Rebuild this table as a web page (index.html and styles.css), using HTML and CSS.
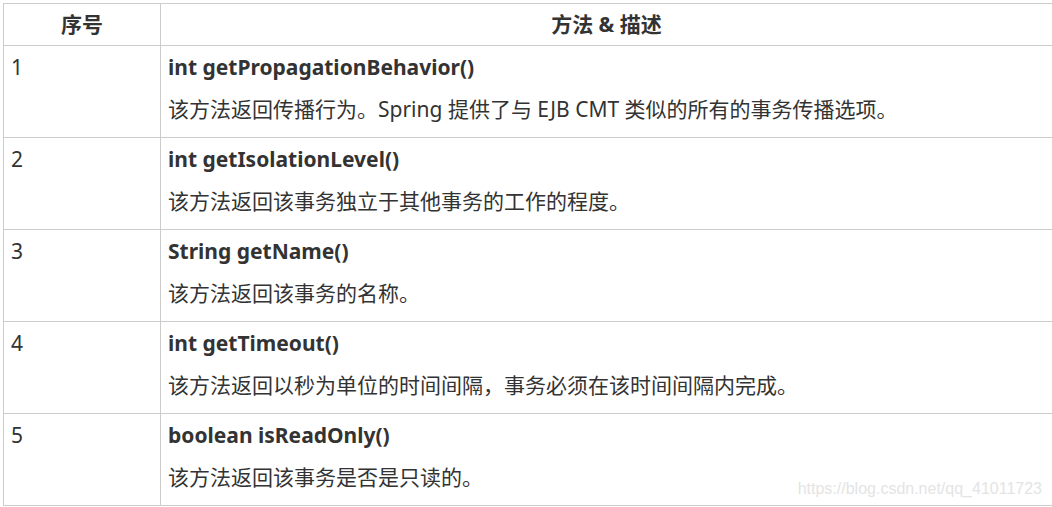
FILE: index.html
```html
<!DOCTYPE html>
<html lang="zh-CN">
<head>
<meta charset="utf-8">
<link rel="stylesheet" href="styles.css">
</head>
<body>
<div class="page">
  <table class="methods">
    <colgroup><col class="col-num"><col class="col-desc"></colgroup>
    <thead>
      <tr><th>序号</th><th>方法 &amp; 描述</th></tr>
    </thead>
    <tbody>
      <tr>
        <td class="num">1</td>
        <td class="desc"><p class="sig">int getPropagationBehavior()</p><p class="txt">该方法返回传播行为。Spring 提供了与 EJB CMT 类似的所有的事务传播选项。</p></td>
      </tr>
      <tr>
        <td class="num">2</td>
        <td class="desc"><p class="sig">int getIsolationLevel()</p><p class="txt">该方法返回该事务独立于其他事务的工作的程度。</p></td>
      </tr>
      <tr>
        <td class="num">3</td>
        <td class="desc"><p class="sig">String getName()</p><p class="txt">该方法返回该事务的名称。</p></td>
      </tr>
      <tr>
        <td class="num">4</td>
        <td class="desc"><p class="sig">int getTimeout()</p><p class="txt">该方法返回以秒为单位的时间间隔，事务必须在该时间间隔内完成。</p></td>
      </tr>
      <tr>
        <td class="num">5</td>
        <td class="desc"><p class="sig">boolean isReadOnly()</p><p class="txt">该方法返回该事务是否是只读的。</p></td>
      </tr>
    </tbody>
  </table>
  <div class="watermark">https://blog.csdn.net/qq_41011723</div>
</div>
</body>
</html>
```
FILE: styles.css
```css
html, body {
  margin: 0;
  padding: 0;
  background: #fff;
}
.page {
  position: relative;
  padding: 3px 0 0 3px;
  width: 1052px;
  height: 507px;
  box-sizing: border-box;
  overflow: hidden;
}
.methods {
  border-collapse: collapse;
  width: 1050px;
  table-layout: fixed;
  font-family: "Noto Sans", "Noto Sans CJK SC", sans-serif;
  font-size: 21px;
  color: #333;
}
.col-num { width: 157px; }
.methods th, .methods td {
  border: 1px solid #ccc;
  text-align: left;
  vertical-align: top;
}
.methods th {
  height: 41px;
  padding: 0;
  text-align: center;
  vertical-align: middle;
  font-weight: bold;
  line-height: 41px;
}
.methods td {
  padding: 6px 7px 13px 7px;
}
.num {
  line-height: 30px;
}
.sig {
  margin: 0 0 12px;
  line-height: 30px;
  font-weight: bold;
}
.txt {
  margin: 0;
  line-height: 30px;
}
.watermark {
  position: absolute;
  right: 10px;
  bottom: 9px;
  font-family: "Liberation Sans", Arial, sans-serif;
  font-size: 16px;
  color: #e4e4e4;
}
```
